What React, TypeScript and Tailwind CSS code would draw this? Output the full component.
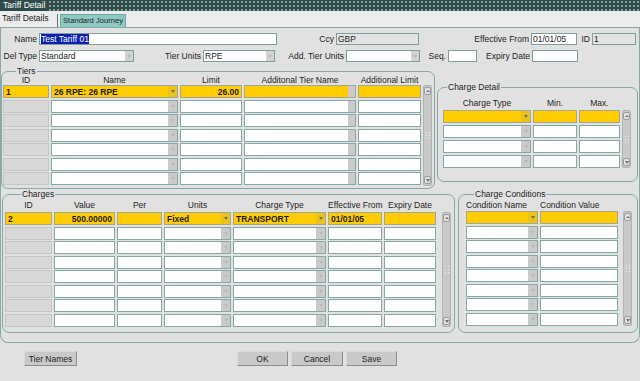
import React from 'react'

type Col = { label: string; w: string; kind?: 'id' | 'drop' | 'block'; right?: boolean }

const tierCols: Col[] = [
  { label: 'ID', w: 'w-[46px]', kind: 'id' },
  { label: 'Name', w: 'w-[127px]', kind: 'drop' },
  { label: 'Limit', w: 'w-[62px]', right: true },
  { label: 'Additonal Tier Name', w: 'w-[112px]', kind: 'block' },
  { label: 'Additional Limit', w: 'w-[63px]' },
]

const detailCols: Col[] = [
  { label: 'Charge Type', w: 'w-[88px]', kind: 'drop' },
  { label: 'Min.', w: 'w-[44px]' },
  { label: 'Max.', w: 'w-[41px]' },
]

const chargeCols: Col[] = [
  { label: 'ID', w: 'w-[47px]', kind: 'id' },
  { label: 'Value', w: 'w-[61px]', right: true },
  { label: 'Per', w: 'w-[45px]' },
  { label: 'Units', w: 'w-[67px]', kind: 'drop' },
  { label: 'Charge Type', w: 'w-[93px]', kind: 'drop' },
  { label: 'Effective From', w: 'w-[54px]' },
  { label: 'Expiry Date', w: 'w-[52px]' },
]

const condCols: Col[] = [
  { label: 'Condition Name', w: 'w-[72px]', kind: 'drop' },
  { label: 'Condition Value', w: 'w-[78px]' },
]

function Arrow({ faint }: { faint?: boolean }) {
  return (
    <div
      className={`w-0 h-0 border-x-[2.5px] border-x-transparent border-t-[3px] ${faint ? 'border-t-[#b9b9b9]' : 'border-t-[#6f6f6f]'}`}
    />
  )
}

function Cell({ col, value, active }: { col: Col; value?: string; active?: boolean }) {
  const look = active
    ? 'bg-[#ffcc00] border-[#a3a88e]'
    : col.kind === 'id'
      ? 'bg-[#d8d8d8] border-[#c6c6c6]'
      : 'bg-white border-[#86a9a6]'
  return (
    <div className={`h-[13px] flex items-center border overflow-hidden ${col.w} ${look}`}>
      <span className={`flex-1 px-[2px] font-bold truncate ${col.right ? 'text-right' : ''}`}>{value}</span>
      {col.kind === 'drop' && (
        <div className={`w-[9px] h-full flex items-center justify-center ${active ? 'bg-[#e9c21a]' : 'bg-[#cacaca]'}`}>
          <Arrow faint={!active} />
        </div>
      )}
      {col.kind === 'block' && <div className="w-[7px] h-full bg-[#cacaca]" />}
    </div>
  )
}

function Grid({ cols, first, rows, gap }: { cols: Col[]; first: string[]; rows: number; gap: string }) {
  return (
    <div className={`flex flex-col ${gap}`}>
      {Array.from({ length: rows }).map((_, r) => (
        <div key={r} className="flex gap-[2px]">
          {cols.map((c, i) => (
            <Cell key={i} col={c} value={r === 0 ? first[i] : ''} active={r === 0} />
          ))}
        </div>
      ))}
    </div>
  )
}

function Headers({ cols, left }: { cols: Col[]; left?: boolean }) {
  return (
    <div className="flex gap-[2px]">
      {cols.map((c, i) => (
        <div key={i} className={`${c.w} whitespace-nowrap ${left ? 'text-left' : 'text-center'}`}>
          {c.label}
        </div>
      ))}
    </div>
  )
}

function Scroll({ h }: { h: string }) {
  const btn =
    'w-[7px] h-[8px] bg-[#e2e2e2] border border-[#9c9c9c] rounded-[2px] flex items-center justify-center'
  return (
    <div className={`${h} w-[9px] flex flex-col items-center justify-between py-[1px] bg-[#c9c9c9] border border-[#b3b3b3] rounded-[2px]`}>
      <div className={btn}>
        <div className="w-0 h-0 border-x-[2px] border-x-transparent border-b-[2.5px] border-b-[#6f6f6f]" />
      </div>
      <div className="grid grid-cols-2 gap-x-[2px] gap-y-[2px]">
        {Array.from({ length: 6 }).map((_, i) => (
          <div key={i} className="w-[1px] h-[1px] bg-[#f2f2f2]" />
        ))}
      </div>
      <div className={btn}>
        <Arrow />
      </div>
    </div>
  )
}

function Field({ w, value, gray, drop, selected }: { w: string; value?: string; gray?: boolean; drop?: boolean; selected?: boolean }) {
  return (
    <div className={`${w} h-[12px] flex items-center border border-[#7f9f9c] overflow-hidden ${gray ? 'bg-[#e3e3e3]' : 'bg-white'}`}>
      {selected ? (
        <span className="ml-[1px] bg-[#0b1fb0] text-white whitespace-nowrap">{value}</span>
      ) : (
        <span className="flex-1 pl-[1px] truncate">{value}</span>
      )}
      {drop && (
        <div className="w-[8px] h-full flex items-center justify-center bg-[#d2d2d2]">
          <Arrow faint />
        </div>
      )}
    </div>
  )
}

function Label({ w, text }: { w: string; text: string }) {
  return <div className={`${w} pr-[2px] text-right whitespace-nowrap`}>{text}</div>
}

function Button({ w, ml, text }: { w: string; ml: string; text: string }) {
  return (
    <button className={`${w} ${ml} h-[15px] text-center bg-[#c9c9c9] border border-[#d9d9d9] border-r-[#8d8d8d] border-b-[#8d8d8d] text-[8.5px]`}>
      {text}
    </button>
  )
}

export default function App() {
  return (
    <div className="w-[640px] h-[381px] overflow-hidden bg-[#e1e1e1] text-[8.5px] leading-[10px] text-[#1e1e1e] font-['Liberation_Sans',Arial,sans-serif]">
      {/* title bar */}
      <div className="h-[11px] flex bg-[#2f4b49]">
        <span className="px-[3px] text-white leading-[11px]">Tariff Detail</span>
        <div className="flex-1 bg-[image:radial-gradient(circle,#84a19e_0.7px,transparent_1.1px)] bg-[length:4px_4px]" />
      </div>

      {/* tabs */}
      <div className="h-[17px] flex items-end bg-[#ececec] border-b border-[#86aaa7]">
        <div className="w-[57px] h-[15px] pl-[2px] leading-[13px] whitespace-nowrap">Tariff Details</div>
        <div className="w-px h-[13px] bg-[#4e7d79]" />
        <div className="ml-[2px] w-[66px] h-[13px] leading-[12px] text-[7.6px] text-center whitespace-nowrap bg-[#8ecac4] border border-b-0 border-[#6fa8a3]">
          Standard Journey
        </div>
      </div>

      {/* main panel */}
      <div className="h-[315px] flex flex-col border-b border-x border-[#86aaa7] rounded-b-[8px]">
        <div className="mt-[5px] flex items-center h-[12px]">
          <Label w="w-[38px]" text="Name" />
          <Field w="w-[238px]" value="Test Tariff 01" selected />
          <Label w="w-[59px]" text="Ccy" />
          <Field w="w-[83px]" value="GBP" gray />
          <Label w="w-[112px]" text="Effective From" />
          <Field w="w-[46px]" value="01/01/05" />
          <Label w="w-[15px]" text="ID" />
          <Field w="w-[44px]" value="1" gray />
        </div>
        <div className="mt-[5px] flex items-center h-[12px]">
          <Label w="w-[38px]" text="Del Type" />
          <Field w="w-[95px]" value="Standard" drop />
          <Label w="w-[69px]" text="Tier Units" />
          <Field w="w-[72px]" value="RPE" drop />
          <Label w="w-[71px]" text="Add. Tier Units" />
          <Field w="w-[74px]" drop />
          <Label w="w-[28px]" text="Seq." />
          <Field w="w-[29px]" />
          <Label w="w-[55px]" text="Expiry Date" />
          <Field w="w-[46px]" />
        </div>

        {/* tiers + charge detail */}
        <div className="mt-[4px] flex items-start">
          <fieldset className="w-[434px] h-[123px] border border-[#86aaa7] rounded-[7px]">
            <legend className="ml-[14px] px-[1px] leading-[10px]">Tiers</legend>
            <div className="pl-[1px] h-[9px] leading-[9px]">
              <Headers cols={tierCols} />
            </div>
            <div className="pl-[1px] flex items-start">
              <Grid cols={tierCols} first={['1', '26 RPE: 26 RPE', '26.00', '', '']} rows={7} gap="gap-y-[1.5px]" />
              <div className="ml-[2px]">
                <Scroll h="h-[101px]" />
              </div>
            </div>
          </fieldset>

          <fieldset className="ml-[2px] mt-[16px] w-[201px] h-[100px] border border-[#86aaa7] rounded-[7px]">
            <legend className="ml-[9px] px-[1px] leading-[10px]">Charge Detail</legend>
            <div className="pl-[5px] h-[18px] flex items-end pb-[2px]">
              <Headers cols={detailCols} />
            </div>
            <div className="pl-[5px] flex items-start">
              <Grid cols={detailCols} first={['', '', '']} rows={4} gap="gap-y-[2px]" />
              <div className="ml-[2px]">
                <Scroll h="h-[58px]" />
              </div>
            </div>
          </fieldset>
        </div>

        {/* charges + conditions */}
        <div className="flex items-start">
          <fieldset className="ml-[1px] w-[453px] h-[144px] border border-[#86aaa7] rounded-[7px]">
            <legend className="ml-[18px] px-[1px] leading-[10px]">Charges</legend>
            <div className="pl-[2px] h-[13px] flex items-end pb-[2px]">
              <Headers cols={chargeCols} />
            </div>
            <div className="pl-[2px] flex items-start">
              <Grid
                cols={chargeCols}
                first={['2', '500.00000', '', 'Fixed', 'TRANSPORT', '01/01/05', '']}
                rows={8}
                gap="gap-y-[1.5px]"
              />
              <div className="ml-[6px]">
                <Scroll h="h-[115px]" />
              </div>
            </div>
          </fieldset>

          <fieldset className="ml-[3px] w-[180px] h-[144px] border border-[#86aaa7] rounded-[7px]">
            <legend className="ml-[15px] px-[1px] leading-[10px]">Charge Conditions</legend>
            <div className="pl-[7px] h-[12px] pt-[1px]">
              <Headers cols={condCols} left />
            </div>
            <div className="pl-[7px] flex items-start">
              <Grid cols={condCols} first={['', '']} rows={8} gap="gap-y-[1.5px]" />
              <div className="ml-[5px]">
                <Scroll h="h-[115px]" />
              </div>
            </div>
          </fieldset>
        </div>
      </div>

      {/* buttons */}
      <div className="mt-[8px] flex">
        <Button w="w-[53px]" ml="ml-[24px]" text="Tier Names" />
        <Button w="w-[51px]" ml="ml-[160px]" text="OK" />
        <Button w="w-[52px]" ml="ml-[3px]" text="Cancel" />
        <Button w="w-[51px]" ml="ml-[3px]" text="Save" />
      </div>
    </div>
  )
}
